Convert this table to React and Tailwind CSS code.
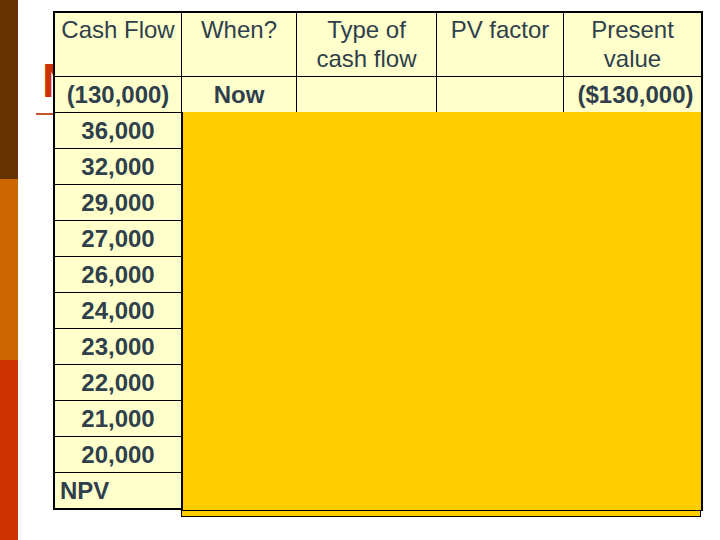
import React from "react";

const header = ["Cash Flow", "When?", "Type of\ncash flow", "PV factor", "Present\nvalue"];

const flows = [
  "36,000", "32,000", "29,000", "27,000", "26,000",
  "24,000", "23,000", "22,000", "21,000", "20,000",
];

/* ── one light-yellow cell ── */
function Cell({ children, className = "" }) {
  return <div className={`bg-[#ffffcc] ${className}`}>{children}</div>;
}

export default function App() {
  return (
    <div className="relative flex h-[540px] w-[720px] overflow-hidden bg-white font-['Liberation_Sans',Arial,sans-serif] text-[#2f3f4c]">
      {/* Slide side bar */}
      <div className="flex w-[18px] shrink-0 flex-col">
        <div className="h-[179px] bg-[#663300]" />
        <div className="h-[181px] bg-[#cc6600]" />
        <div className="flex-1 bg-[#cc3300]" />
      </div>

      {/* Slide body */}
      <div className="relative flex-1">
        {/* Title, mostly hidden behind the table */}
        <div className="w-[35px] overflow-hidden">
          <h1 className="pl-[24px] pt-[57px] text-[48px] font-bold leading-none text-[#cc3300]">N</h1>
        </div>
        <div className="ml-[18px] mt-[8px] h-[2px] w-[600px] bg-[#c0552b]" />

        {/* Table lies over the title */}
        <div className="absolute left-[35px] top-[11px] grid grid-cols-[126px_114px_139px_126px_137px] gap-px border-2 border-black bg-black">
          {header.map(h => (
            <Cell key={h} className="h-[63px] whitespace-pre-line pt-[2px] text-center text-[24px] leading-[29px]">
              {h}
            </Cell>
          ))}

          <Cell className="flex h-[35px] items-center justify-center text-[24px] font-bold">(130,000)</Cell>
          <Cell className="flex h-[35px] items-center justify-center text-[24px] font-bold">Now</Cell>
          <Cell className="h-[35px]" />
          <Cell className="h-[35px]" />
          <Cell className="flex h-[35px] items-center justify-center pl-[6px] text-[24px] font-bold">($130,000)</Cell>

          {flows.map(f => (
            <React.Fragment key={f}>
              <Cell className="flex h-[35px] items-center justify-center text-[24px] font-bold">{f}</Cell>
              <Cell className="h-[35px]" />
              <Cell className="h-[35px]" />
              <Cell className="h-[35px]" />
              <Cell className="h-[35px]" />
            </React.Fragment>
          ))}

          <Cell className="flex h-[35px] items-center pl-[5px] text-[24px] font-bold">NPV</Cell>
          <Cell className="h-[35px]" />
          <Cell className="h-[35px]" />
          <Cell className="h-[35px]" />
          <Cell className="h-[35px]" />
        </div>

        {/* Yellow cover box */}
        <div className="absolute left-[163px] top-[112px] w-[522px]">
          <div className="h-[399px] border-x-2 border-b border-black bg-[#ffcc00]" />
          <div className="mr-[2px] h-[6px] border-x border-b border-black bg-[#ffcc00]" />
        </div>
      </div>
    </div>
  );
}
